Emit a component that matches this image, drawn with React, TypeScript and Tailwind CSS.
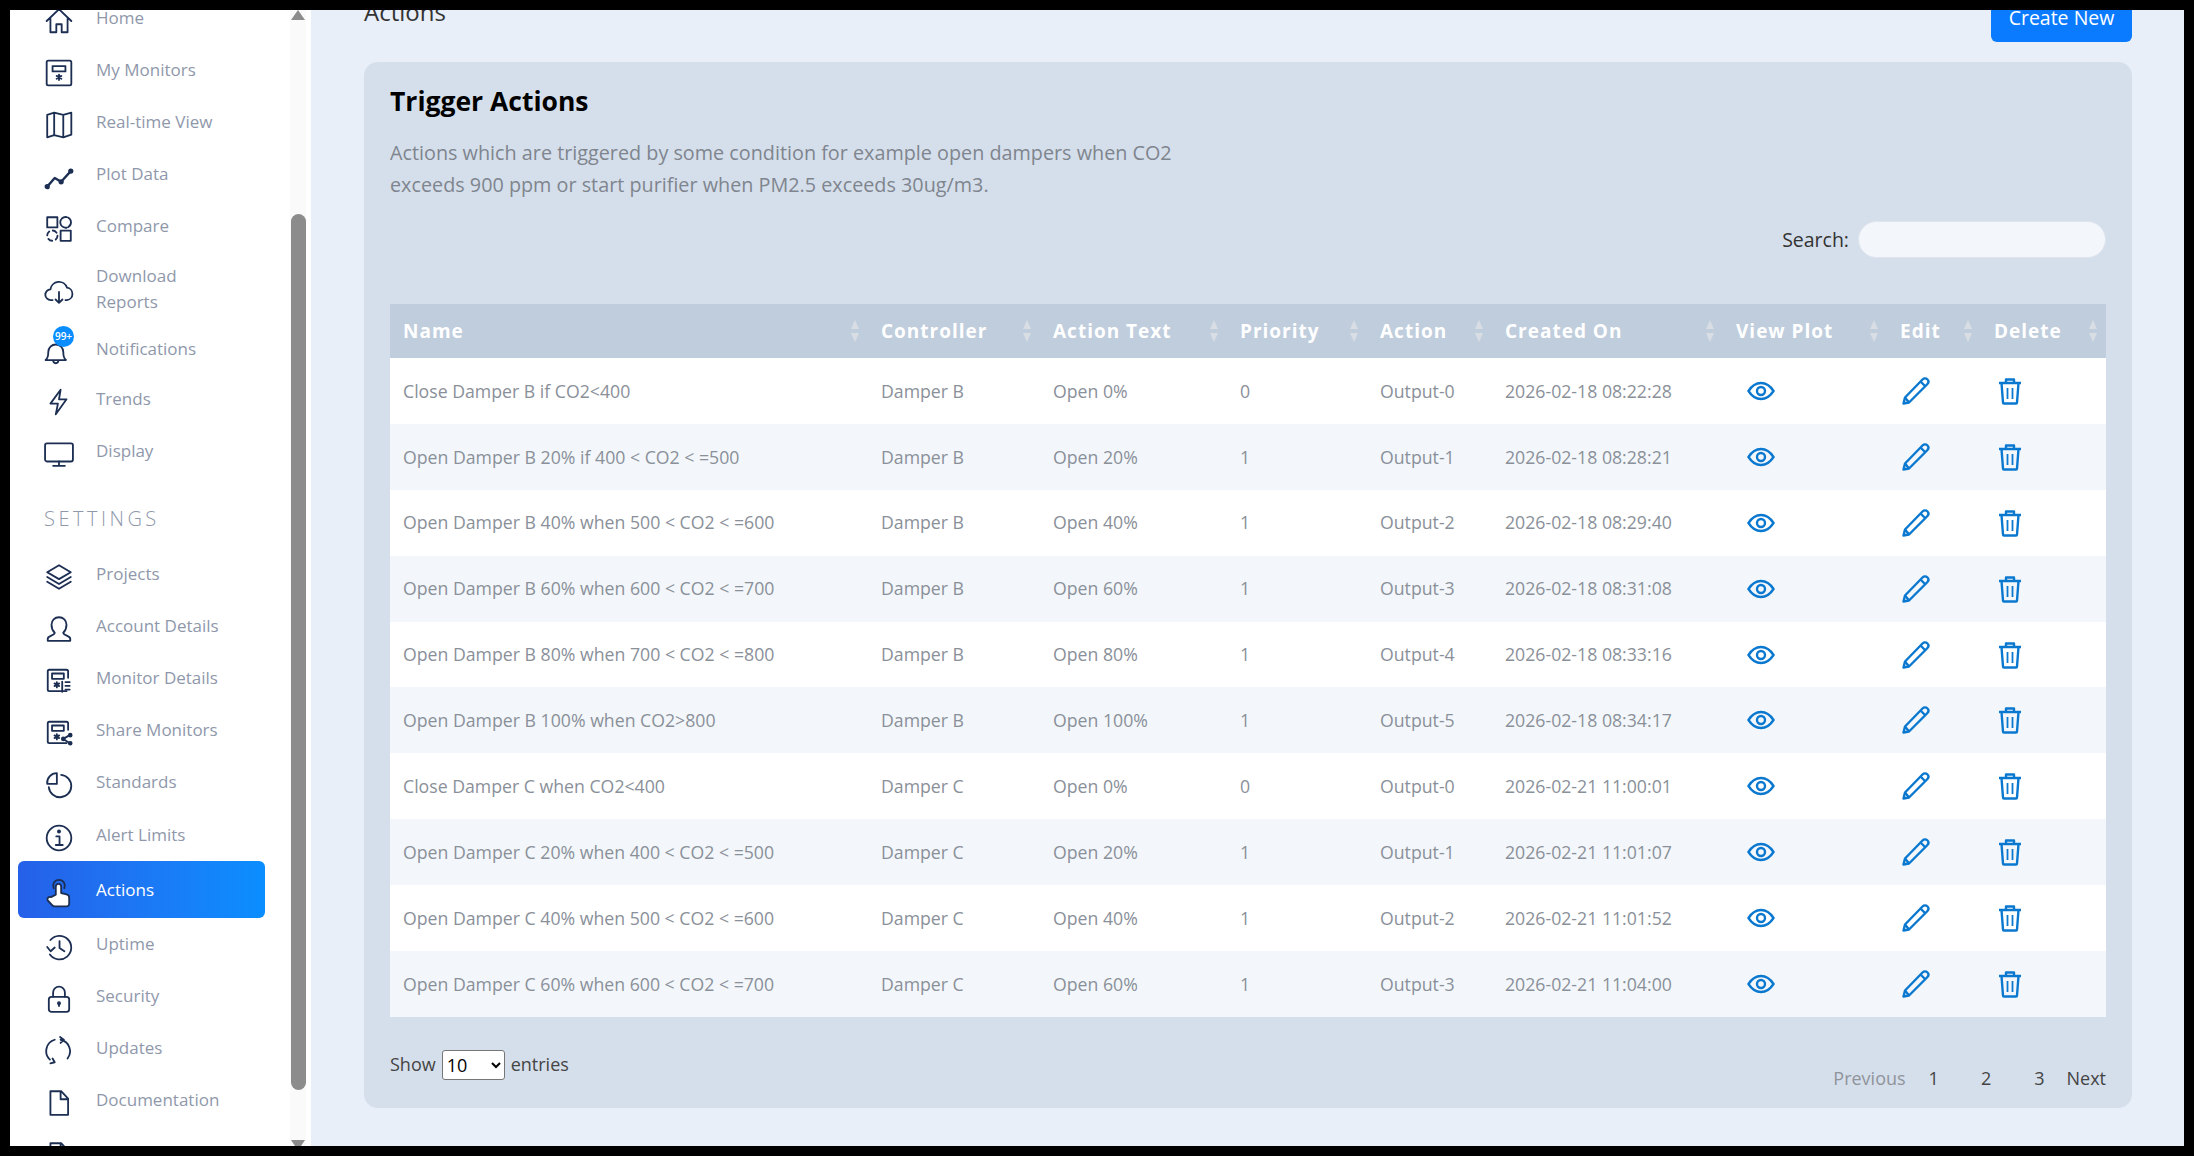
import React from 'react'

// table rows as they appear on the page
const rows = [
  ['Close Damper B if CO2<400', 'Damper B', 'Open 0%', '0', 'Output-0', '2026-02-18 08:22:28'],
  ['Open Damper B 20% if 400 < CO2 < =500', 'Damper B', 'Open 20%', '1', 'Output-1', '2026-02-18 08:28:21'],
  ['Open Damper B 40% when 500 < CO2 < =600', 'Damper B', 'Open 40%', '1', 'Output-2', '2026-02-18 08:29:40'],
  ['Open Damper B 60% when 600 < CO2 < =700', 'Damper B', 'Open 60%', '1', 'Output-3', '2026-02-18 08:31:08'],
  ['Open Damper B 80% when 700 < CO2 < =800', 'Damper B', 'Open 80%', '1', 'Output-4', '2026-02-18 08:33:16'],
  ['Open Damper B 100% when CO2>800', 'Damper B', 'Open 100%', '1', 'Output-5', '2026-02-18 08:34:17'],
  ['Close Damper C when CO2<400', 'Damper C', 'Open 0%', '0', 'Output-0', '2026-02-21 11:00:01'],
  ['Open Damper C 20% when 400 < CO2 < =500', 'Damper C', 'Open 20%', '1', 'Output-1', '2026-02-21 11:01:07'],
  ['Open Damper C 40% when 500 < CO2 < =600', 'Damper C', 'Open 40%', '1', 'Output-2', '2026-02-21 11:01:52'],
  ['Open Damper C 60% when 600 < CO2 < =700', 'Damper C', 'Open 60%', '1', 'Output-3', '2026-02-21 11:04:00'],
]

const columns = [
  { label: 'Name', width: 'w-[478px]' },
  { label: 'Controller', width: 'w-[172px]' },
  { label: 'Action Text', width: 'w-[187px]' },
  { label: 'Priority', width: 'w-[140px]' },
  { label: 'Action', width: 'w-[125px]' },
  { label: 'Created On', width: 'w-[231px]' },
  { label: 'View Plot', width: 'w-[164px]' },
  { label: 'Edit', width: 'w-[94px]' },
  { label: 'Delete', width: 'w-[125px]' },
]

function Ico({ children, fill = 'none' }: { children: React.ReactNode; fill?: string }) {
  return (
    <svg width="30" height="30" viewBox="0 0 28 28" fill={fill} stroke="#1c2e52" strokeWidth="1.7" strokeLinecap="round" strokeLinejoin="round">
      {children}
    </svg>
  )
}

const monitorBase = (
  <>
    <path d="M21 23.500H5a1.500 1.500 0 0 1-1.500-1.500V5A1.500 1.500 0 0 1 5 3.500h16A1.500 1.500 0 0 1 22.500 5v6" />
    <rect x="7.500" y="7" width="11" height="5" />
    <path d="M12 15v5M9.800 16.200l4.400 2.600M14.200 16.200l-4.400 2.600" />
  </>
)

const icons: Record<string, React.ReactNode> = {
  home: <Ico><path d="M2.500 14 14 3l11.500 11M6 12v12.500h5.500V17h5v7.500H22V12" /></Ico>,
  monitors: (
    <Ico>
      <rect x="2.500" y="2.500" width="23" height="23" rx="1.500" />
      <rect x="8" y="7.500" width="12" height="5" />
      <path d="M14 15.500v5M11.800 16.700l4.400 2.600M16.200 16.700l-4.400 2.600" />
    </Ico>
  ),
  map: <Ico><path d="M3 4.500 9.500 2.500l8.500 2 7.500-2V23l-7.500 2.500-8.500-2L3 25.500zM9.500 2.500v21M18 4.500v21" /></Ico>,
  plot: (
    <Ico>
      <path d="M3 23l7-8 6 3.500 9-10" strokeWidth="2.200" />
      <circle cx="3" cy="23" r="1.600" fill="#1c2e52" />
      <circle cx="16" cy="18.500" r="1.600" fill="#1c2e52" />
      <circle cx="25" cy="8.500" r="1.600" fill="#1c2e52" />
    </Ico>
  ),
  compare: (
    <Ico>
      <rect x="3" y="3" width="9.500" height="9.500" />
      <rect x="15.500" y="15.500" width="9.500" height="9.500" />
      <circle cx="20.200" cy="7.800" r="5" strokeDasharray="5 1.400" />
      <circle cx="7.800" cy="20.200" r="4.800" strokeDasharray="4 3.500" />
    </Ico>
  ),
  download: (
    <Ico>
      <path d="M8 21.500H6.500a5 5 0 0 1-.5-10A8 8 0 0 1 21.500 10a5.800 5.800 0 0 1 0 11.500H20" />
      <path d="M14 14v10M10.800 21l3.200 3.200 3.200-3.200" />
    </Ico>
  ),
  bell: <Ico><path d="M1.500 21.500c2-1.500 2.500-4 2.500-7.500a7 7 0 0 1 14 0c0 3.500.5 6 2.500 7.500zM8.500 21.500c0 2 1 3 2.500 3s2.500-1 2.500-3" /></Ico>,
  trends: <Ico><path d="M15.500 2.500 6 15.500h7l-2 10 10-14h-7z" /></Ico>,
  display: (
    <Ico>
      <rect x="1" y="4" width="26" height="17" rx="1.800" />
      <path d="M14 21v3.500M8.500 25h11" />
    </Ico>
  ),
  projects: <Ico><path d="M14 3 3 9.500 14 16l11-6.500zM3 14l11 6.500L25 14M3 18.500 14 25l11-6.500" /></Ico>,
  account: <Ico><path d="M3.500 25h21v-2c0-2.500-6.500-3-6.500-5.500 2-2 3-4.500 3-7.500C21 6 18 3 14 3S7 6 7 10c0 3 1 5.500 3 7.500C10 20 3.500 20.500 3.500 23z" /></Ico>,
  details: (
    <Ico>
      {monitorBase}
      <path d="M17 14.500V24M20 15h4M20 18.500h4M20 22h4" />
    </Ico>
  ),
  share: (
    <Ico>
      {monitorBase}
      <path d="M18 19.500l6-3.500M18 19.500l6 4" />
      <circle cx="18" cy="19.500" r="1.300" fill="#1c2e52" />
      <circle cx="24.500" cy="16" r="1.300" fill="#1c2e52" />
      <circle cx="24.500" cy="23.500" r="1.300" fill="#1c2e52" />
    </Ico>
  ),
  standards: <Ico><path d="M16 4.500A10.500 10.500 0 1 1 4.500 16M12 3v10H3a9 9 0 0 1 9-10z" /></Ico>,
  alert: (
    <Ico>
      <circle cx="14" cy="14" r="11.500" />
      <path d="M11.500 12.500H14.500V20M11 20.500h6.500" />
      <circle cx="14" cy="8" r="1" fill="#1c2e52" />
    </Ico>
  ),
  actions: (
    <Ico fill="#ffffff">
      <path d="M9 9.500a5.500 5.500 0 1 1 10 0" fill="none" />
      <path d="M11 15.500V8a2.500 2.500 0 0 1 5 0v6l5 1.200c1.600.4 2.500 1.400 2.500 3V24a2.500 2.500 0 0 1-2.500 2.500H10c-1 0-1.800-.4-2.400-1.200L3.500 21c-1-1.500.5-4 3-3.200z" />
    </Ico>
  ),
  uptime: (
    <Ico>
      <path d="M6 7.500A11 11 0 1 1 5.500 21M3 14l3.200 4 3.800-3.500" />
      <path d="M14.500 8.500V15l4.500 3" />
    </Ico>
  ),
  security: (
    <Ico>
      <rect x="4.500" y="12" width="19" height="14" rx="2.500" />
      <path d="M8.500 12V8a5.500 5.500 0 0 1 11 0v4M14 18v2.500" />
      <circle cx="14" cy="18" r="1" fill="#1c2e52" />
    </Ico>
  ),
  updates: (
    <Ico>
      <path d="M15.500 3.500A11 11 0 0 1 22 21M10 3.500A11 11 0 0 0 5.500 22M15 1l3.500 2.500L15.500 6.500M6 25.500l4-1-2-3.500" />
    </Ico>
  ),
  doc: <Ico><path d="M6 3h10l6.500 7v15H6zM15.500 3v7.500h7" /></Ico>,
}

const navTop = [
  { label: 'Home', icon: 'home', h: 'h-[52px]' },
  { label: 'My Monitors', icon: 'monitors', h: 'h-[52px]' },
  { label: 'Real-time View', icon: 'map', h: 'h-[52px]' },
  { label: 'Plot Data', icon: 'plot', h: 'h-[52px]' },
  { label: 'Compare', icon: 'compare', h: 'h-[52px]' },
  { label: 'Download Reports', icon: 'download', h: 'h-[74px]' },
  { label: 'Notifications', icon: 'bell', h: 'h-[46px]' },
  { label: 'Trends', icon: 'trends', h: 'h-[53px]' },
  { label: 'Display', icon: 'display', h: 'h-[52px]' },
]

const navSettings = [
  { label: 'Projects', icon: 'projects', h: 'h-[52px]' },
  { label: 'Account Details', icon: 'account', h: 'h-[52px]' },
  { label: 'Monitor Details', icon: 'details', h: 'h-[52px]' },
  { label: 'Share Monitors', icon: 'share', h: 'h-[52px]' },
  { label: 'Standards', icon: 'standards', h: 'h-[52px]' },
  { label: 'Alert Limits', icon: 'alert', h: 'h-[53px]' },
  { label: 'Actions', icon: 'actions', h: 'h-[57px]', active: true },
  { label: 'Uptime', icon: 'uptime', h: 'h-[52px]' },
  { label: 'Security', icon: 'security', h: 'h-[52px]' },
  { label: 'Updates', icon: 'updates', h: 'h-[52px]' },
  { label: 'Documentation', icon: 'doc', h: 'h-[52px]' },
]

type NavEntry = { label: string; icon: string; h: string; active?: boolean }

function NavItem({ item }: { item: NavEntry }) {
  return (
    <div
      className={`${item.h} ml-[8px] w-[247px] flex items-center rounded-[6px] pl-[26px] ${
        item.active ? 'bg-gradient-to-r from-[#2560e8] to-[#0a8eff] text-white font-medium' : 'text-[#8f98ab]'
      }`}
    >
      <div className="relative w-[30px] h-[30px] mt-[6px] shrink-0">
        {icons[item.icon]}
        {item.icon === 'bell' && (
          <span className="absolute -top-[11px] left-[9px] w-[21px] h-[21px] rounded-full bg-[#0a8eff] text-white text-[10px] font-semibold flex items-center justify-center">
            99+
          </span>
        )}
      </div>
      <span className="ml-[22px] w-[132px] text-[17px] leading-[26px]">{item.label}</span>
    </div>
  )
}

function SortCaret() {
  return (
    <svg width="10" height="24" viewBox="0 0 10 24" className="shrink-0" fill="#d9dee5">
      <path d="M5 1l4 9H1zM5 23l4-9H1z" />
    </svg>
  )
}

function EyeIcon() {
  return (
    <svg width="28" height="22" viewBox="0 0 28 22" fill="none" stroke="#0b78d0" strokeWidth="2.400">
      <path d="M1.500 11C5 5.500 9 3 14 3s9 2.500 12.500 8C23 16.500 19 19 14 19S5 16.500 1.500 11z" />
      <circle cx="14" cy="11" r="4" />
    </svg>
  )
}

function PencilIcon() {
  return (
    <svg width="28" height="28" viewBox="0 0 28 28" fill="none" stroke="#0b78d0" strokeWidth="2.400" strokeLinejoin="round">
      <path d="M7 25.500 1.500 26.500 3 20.500 20.500 2.500c1.500-1.500 3.500-1.500 5 0s1 3.500-.500 5z" />
      <path d="M3 20.500l4 5M18.500 4.500l5 5" />
    </svg>
  )
}

function TrashIcon() {
  return (
    <svg width="24" height="28" viewBox="0 0 24 28" fill="none" stroke="#0b78d0" strokeWidth="2.400" strokeLinejoin="round">
      <path d="M1 6h22M8 6V2.500h8V6M3.500 6l1.500 19.500a1 1 0 0 0 1 1h12a1 1 0 0 0 1-1L20.500 6" />
      <path d="M9.500 11v11M14.500 11v11" strokeWidth="1.800" />
    </svg>
  )
}

export default function App() {
  return (
    <div className="w-screen h-screen bg-black p-[10px] font-['Open_Sans',sans-serif]">
      <div className="w-full h-full flex overflow-hidden bg-[#e8eff8]">
        {/* Sidebar */}
        <aside className="w-[301px] shrink-0 bg-white flex">
          <nav className="w-[280px] shrink-0 -mt-[18px]">
            {navTop.map((item) => (
              <NavItem key={item.label} item={item} />
            ))}
            <div className="h-[71px] flex items-center pl-[34px] pt-[12px] text-[20px] font-light tracking-[3.500px] text-[#8f98ab]">SETTINGS</div>
            {navSettings.map((item) => (
              <NavItem key={item.label} item={item} />
            ))}
            <NavItem item={{ label: '', icon: 'doc', h: 'h-[52px]' }} />
          </nav>
          {/* Scrollbar */}
          <div className="w-[16px] shrink-0 flex flex-col items-center bg-[#fafafa]">
            <svg width="14" height="10" viewBox="0 0 14 10" fill="#8c8c8c"><path d="M7 0l7 10H0z" /></svg>
            <div className="w-[15px] h-[876px] mt-[194px] rounded-full bg-[#8c8c8c]" />
            <svg width="14" height="6" viewBox="0 0 14 6" fill="#8c8c8c" className="mt-auto"><path d="M0 0h14L10 6H4z" /></svg>
          </div>
        </aside>

        {/* Main */}
        <main className="flex-1 min-w-0 pl-[53px] pr-[52px]">
          <div className="-mt-[16px] h-[48px] flex justify-between items-start">
            <h1 className="text-[24px] leading-[36px] text-[#333333]">Actions</h1>
            <button className="w-[141px] h-[48px] rounded-[6px] bg-[#0a7bff] text-white text-[19.500px] leading-[48px]">Create New</button>
          </div>

          <section className="mt-[20px] h-[1046px] rounded-[14px] bg-[#d5dfeb] px-[26px]">
            <h2 className="pt-[24px] text-[26.500px] leading-[30px] font-bold text-black">Trigger Actions</h2>
            <p className="mt-[21px] w-[800px] text-[19.800px] leading-[32px] text-[#7f858e]">
              Actions which are triggered by some condition for example open dampers when CO2 exceeds 900 ppm or start purifier when PM2.5 exceeds 30ug/m3.
            </p>
            <div className="mt-[20px] flex justify-end items-center gap-[9px]">
              <span className="text-[19.500px] text-[#333333]">Search:</span>
              <input className="w-[248px] h-[37px] rounded-full bg-[#f3f6fb] border border-[#dfe5ee]" />
            </div>

            <table className="mt-[46px] w-[1716px] table-fixed border-collapse">
              <thead>
                <tr className="h-[54px] bg-[#c0cddd]">
                  {columns.map((col) => (
                    <th key={col.label} className={`${col.width} pl-[13px] pr-[8px] text-left text-[19px] font-bold tracking-[1px] text-white`}>
                      <div className="flex items-center justify-between">
                        {col.label}
                        <SortCaret />
                      </div>
                    </th>
                  ))}
                </tr>
              </thead>
              <tbody>
                {rows.map((row, i) => (
                  <tr key={row[0]} className={`h-[65.900px] ${i % 2 === 0 ? 'bg-white' : 'bg-[#f3f7fb]'}`}>
                    {row.map((cell, j) => (
                      <td key={j} className="pl-[13px] text-[17.700px] text-[#8a9099]">{cell}</td>
                    ))}
                    <td className="pl-[24px]"><EyeIcon /></td>
                    <td className="pl-[15px]"><PencilIcon /></td>
                    <td className="pl-[17px]"><TrashIcon /></td>
                  </tr>
                ))}
              </tbody>
            </table>

            <div className="mt-[33px] flex justify-between items-start text-[18px] text-[#444444]">
              <div className="flex items-center gap-[6px]">
                <span>Show</span>
                <select className="w-[63px] h-[30px] rounded-[3px] border border-[#767676] bg-white text-black text-[18px]">
                  <option>10</option>
                </select>
                <span>entries</span>
              </div>
              <div className="mt-[15px] flex items-center">
                <span className="text-[#8f949b]">Previous</span>
                <span className="ml-[23px]">1</span>
                <span className="ml-[42px]">2</span>
                <span className="ml-[43px]">3</span>
                <span className="ml-[22px]">Next</span>
              </div>
            </div>
          </section>
        </main>
      </div>
    </div>
  )
}
